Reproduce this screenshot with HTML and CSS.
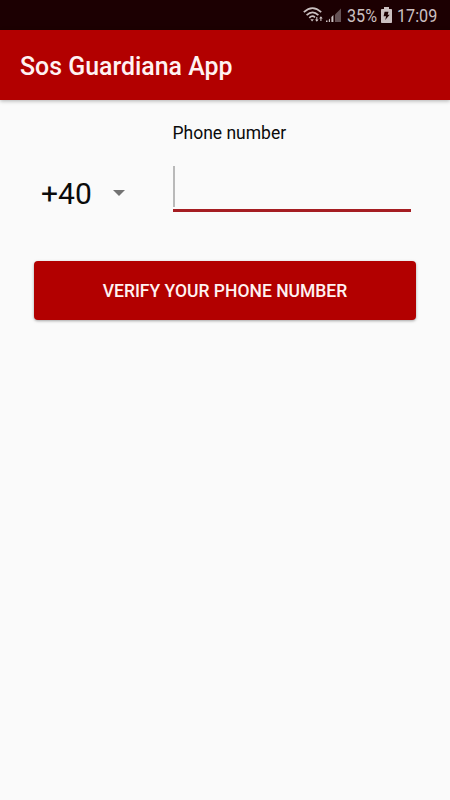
FILE: index.html
```html
<!DOCTYPE html>
<html lang="en">
<head>
<meta charset="utf-8">
<title>Sos Guardiana App</title>
<link rel="stylesheet" href="styles.css">
</head>
<body>
<div class="status">
  <svg class="wifi" width="21" height="16" viewBox="0 0 21 16" fill="none" stroke="currentColor" stroke-width="1.7">
    <path d="M.8 5.2Q9.5-2.8 18.2 5.2M3.6 8.2Q9.5 2.4 15.4 8.2M6.3 10.9Q9.2 7.8 12 10.3"/>
    <path d="M7.4 12.2h3.4l-1.7 2.4z" fill="currentColor" stroke="none"/>
    <path d="M13.8 10v4M17.9 14V10" stroke-width="1.1"/>
    <path d="M12 12.6h3.6l-1.8 2.2zM16.1 11.4h3.6L17.9 9.2z" fill="currentColor" stroke="none"/>
  </svg>
  <svg class="signal" width="16" height="15" viewBox="0 0 16 15">
    <path class="signal-off" d="M9 6.5 15 .5V14H9z"/>
    <path d="M0 12.5h1.5V14H0zM2.8 11.7 4 10.5V14H2.8zM5.4 9 7.4 7V14H5.4z" fill="currentColor"/>
  </svg>
  <span class="percent"><span>35%</span></span>
  <svg class="battery" width="11" height="16" viewBox="0 0 11 16">
    <path d="M3 0h5v2h2.2q.8 0 .8.8v12.4q0 .8-.8.8H.8q-.8 0-.8-.8V2.8Q0 2 .8 2H3z" fill="currentColor"/>
    <path class="bolt" d="M3.6 4.7h3.9L6.7 7.7h2L4.2 13l.9-3.8H2.6z"/>
  </svg>
  <span class="clock"><span>17:09</span></span>
</div>
<header class="appbar"><h1>Sos Guardiana App</h1></header>
<main>
  <div class="form">
    <div class="code">+40
      <svg width="12" height="6" viewBox="0 0 12 6"><path d="M0 0h12L6 6z" fill="currentColor"/></svg>
    </div>
    <div class="field">
      <label>Phone number</label>
      <div class="entry"><i class="caret"></i></div>
    </div>
  </div>
  <button class="verify" type="button">VERIFY YOUR PHONE NUMBER</button>
</main>
</body>
</html>
```

FILE: styles.css
```css
* { box-sizing: border-box; }
body {
  margin: 0;
  height: 800px;
  overflow: hidden;
  background: #fafafa;
  color: #0b0b0b;
  font-family: Roboto, sans-serif;
}
.status {
  display: flex;
  align-items: center;
  height: 30px;
  padding: 0 0 0 303px;
  background: #1c0002;
  color: #cbc0c1;
  font-size: 19px;
  line-height: 30px;
}
.status svg { flex: none; display: block; }
.signal { margin-left: 2px; }
.signal-off { fill: #655255; }
.percent, .clock { padding-top: 2px; }
.percent { width: 30px; margin-left: 5px; }
.percent span, .clock span {
  display: inline-block;
  transform: scaleX(.85);
  transform-origin: left;
}
.battery { margin-left: 4px; }
.bolt { fill: #1c0002; }
.clock { width: 42px; margin-left: 5px; }
.appbar {
  display: flex;
  align-items: center;
  height: 70px;
  padding: 4px 20px 0;
  background: #b20000;
  color: #fff2f2;
  box-shadow: 0 1px 4px rgba(0, 0, 0, .3);
}
h1 { margin: 0; font-size: 24.9px; font-weight: 500; line-height: 30px; }
main { padding: 20px 34px 0; }
.form { display: flex; height: 141px; }
.code {
  display: flex;
  align-items: center;
  gap: 21px;
  width: 138.5px;
  height: 36px;
  margin-top: 55px;
  padding-left: 7px;
  font-size: 30px;
}
.code svg { color: #737373; }
.field { width: 240px; }
label { display: block; height: 26px; font-size: 17.5px; line-height: 26px; }
.entry {
  width: 238.5px;
  height: 46px;
  margin-top: 20px;
  border-bottom: 3px solid #a51d22;
}
.caret { display: block; width: 2px; height: 41px; margin-left: .5px; background: #b9b9b9; }
.verify {
  display: block;
  width: 382px;
  height: 59px;
  padding: 0;
  border: 0;
  border-radius: 4px;
  background: #b20000;
  color: #fff2f2;
  box-shadow: 0 1px 3px rgba(0, 0, 0, .35);
  font: 500 17.5px Roboto, sans-serif;
}
```
